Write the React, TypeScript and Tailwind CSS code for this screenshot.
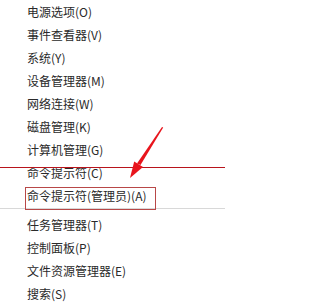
const topItems = [
  '电源选项(O)',
  '事件查看器(V)',
  '系统(Y)',
  '设备管理器(M)',
  '网络连接(W)',
  '磁盘管理(K)',
  '计算机管理(G)',
  '命令提示符(C)',
  '命令提示符(管理员)(A)',
];

const bottomItems = ['任务管理器(T)', '控制面板(P)', '文件资源管理器(E)', '搜索(S)'];

function MenuItem({ label }: { label: string }) {
  return (
    <div className="flex h-[23px] items-center pl-[27px] text-[12px] leading-none text-[#2a2a2a]">
      {label}
    </div>
  );
}

export default function App() {
  return (
    <div
      className="relative h-[305px] w-[225px] overflow-hidden bg-white"
      style={{ fontFamily: '"Noto Sans CJK SC", "Noto Sans", sans-serif' }}
    >
      <div className="flex flex-col">
        {topItems.map((item) => (
          <MenuItem key={item} label={item} />
        ))}
        {/* separator */}
        <div className="h-[6px] pt-[1px]">
          <div className="h-px bg-[#d8d8d8]" />
        </div>
        {bottomItems.map((item) => (
          <MenuItem key={item} label={item} />
        ))}
      </div>

      {/* annotations */}
      <div className="absolute left-0 top-[167px] h-px w-full bg-[#b8141c]" />
      <div className="absolute left-[25px] top-[187px] h-[23px] w-[131px] border border-[#b84848]" />
      <svg className="absolute left-0 top-0" width="225" height="305" viewBox="0 0 225 305">
        <polygon points="162,127 163.2,127.6 140.5,165 137,163.5" fill="#e8141c" />
        <polygon points="130,178 134.2,161.5 143,167" fill="#e8141c" />
      </svg>
    </div>
  );
}
